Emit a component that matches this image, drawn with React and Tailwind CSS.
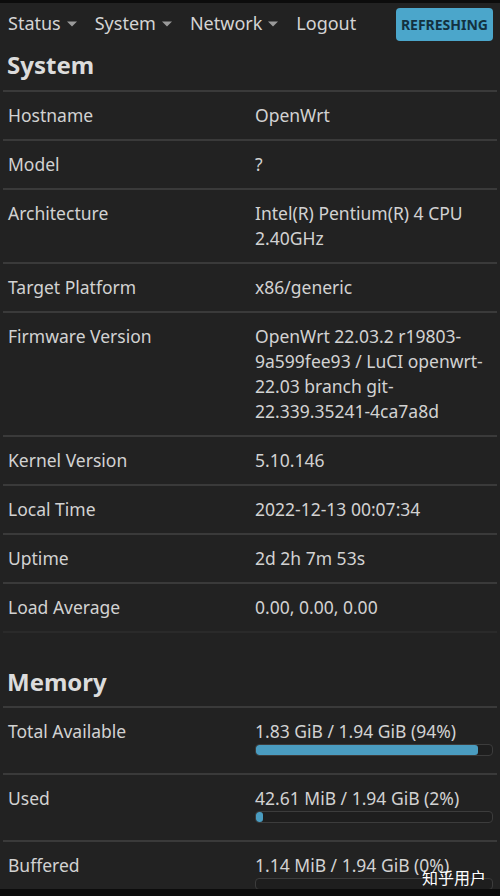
import React from "react";

const Caret = () => (
  <svg width="12" height="8" viewBox="0 0 12 8" className="ml-[5px] mt-[2px]">
    <path d="M1 1.5 L11 1.5 L6 6.5 Z" fill="#9a9a9a" />
  </svg>
);

const systemRows = [
  ["Hostname", ["OpenWrt"]],
  ["Model", ["?"]],
  ["Architecture", ["Intel(R) Pentium(R) 4 CPU 2.40GHz"]],
  ["Target Platform", ["x86/generic"]],
  ["Firmware Version", ["OpenWrt 22.03.2 r19803-9a599fee93 / LuCI openwrt-22.03 branch git-22.339.35241-4ca7a8d"]],
  ["Kernel Version", ["5.10.146"]],
  ["Local Time", ["2022-12-13 00:07:34"]],
  ["Uptime", ["2d 2h 7m 53s"]],
  ["Load Average", ["0.00, 0.00, 0.00"]],
];

const memRows = [
  ["Total Available", "1.83 GiB / 1.94 GiB (94%)", 94],
  ["Used", "42.61 MiB / 1.94 GiB (2%)", 2],
  ["Buffered", "1.14 MiB / 1.94 GiB (0%)", 0],
];

export default function App() {
  return (
    <div
      className="w-[500px] h-[896px] overflow-hidden bg-[#222222] text-[#d2d2d2] relative"
      style={{ fontFamily: '"Noto Sans", "Noto Sans CJK SC", sans-serif' }}
    >
      <div className="h-[3px] bg-[#0c0c0c]" />
      <div className="flex items-center h-[40px] px-[8px] text-[18px] text-[#d4d4d4]">
        <div className="flex items-center mr-[17px]">Status<Caret /></div>
        <div className="flex items-center mr-[17px]">System<Caret /></div>
        <div className="flex items-center mr-[17px]">Network<Caret /></div>
        <div className="flex items-center">Logout</div>
        <div className="ml-auto mr-[-1px] mt-[3px] h-[33px] px-[5px] flex items-center rounded-[4px] bg-[#4ba6cb] text-[#13313f] text-[14px] font-bold">
          REFRESHING
        </div>
      </div>
      <div className="mx-[3px]">
        <h2 className="px-[4px] pt-[5px] pb-[9px] text-[24px] font-bold text-[#dcdcdc] leading-[33px]">System</h2>
        <div>
          {systemRows.map(([k, v]) => (
            <div key={k} className="flex border-t-2 border-[#3a3a3a] pt-[11px] pb-[11px]">
              <div className="w-[252px] pl-[5px] text-[17.5px] leading-[25px]">{k}</div>
              <div className="w-[238px] text-[17.5px] leading-[25px]">{v}</div>
            </div>
          ))}
        </div>
        <h2 className="px-[4px] pt-[32px] pb-[8px] border-t-2 border-[#2a2a2a] text-[24px] font-bold text-[#dcdcdc] leading-[33px]">Memory</h2>
        <div>
          {memRows.map(([k, v, p]) => (
            <div key={k} className="flex border-t-2 border-[#3a3a3a] pt-[11px] pb-[17px]">
              <div className="w-[252px] pl-[5px] text-[17.5px] leading-[25px]">{k}</div>
              <div className="w-[238px]">
                <div className="text-[17.5px] leading-[25px]">{v}</div>
                <div className="h-[12px] rounded-[4px] border border-[#3c3c3c] bg-[#1e1e1e] overflow-hidden">
                  <div className="h-full bg-[#4a9cc0] rounded-[3px]" style={{ width: `${p === 2 ? 3 : p}%`, minWidth: p === 0 ? 0 : 6 }} />
                </div>
              </div>
            </div>
          ))}
        </div>
      </div>
      <div className="absolute left-0 right-0 bottom-0 h-[7px] bg-[#0c0c0c]" />
      <div className="absolute right-[14px] bottom-[8px] text-[16px] text-white leading-[20px]">知乎用户</div>
    </div>
  );
}
